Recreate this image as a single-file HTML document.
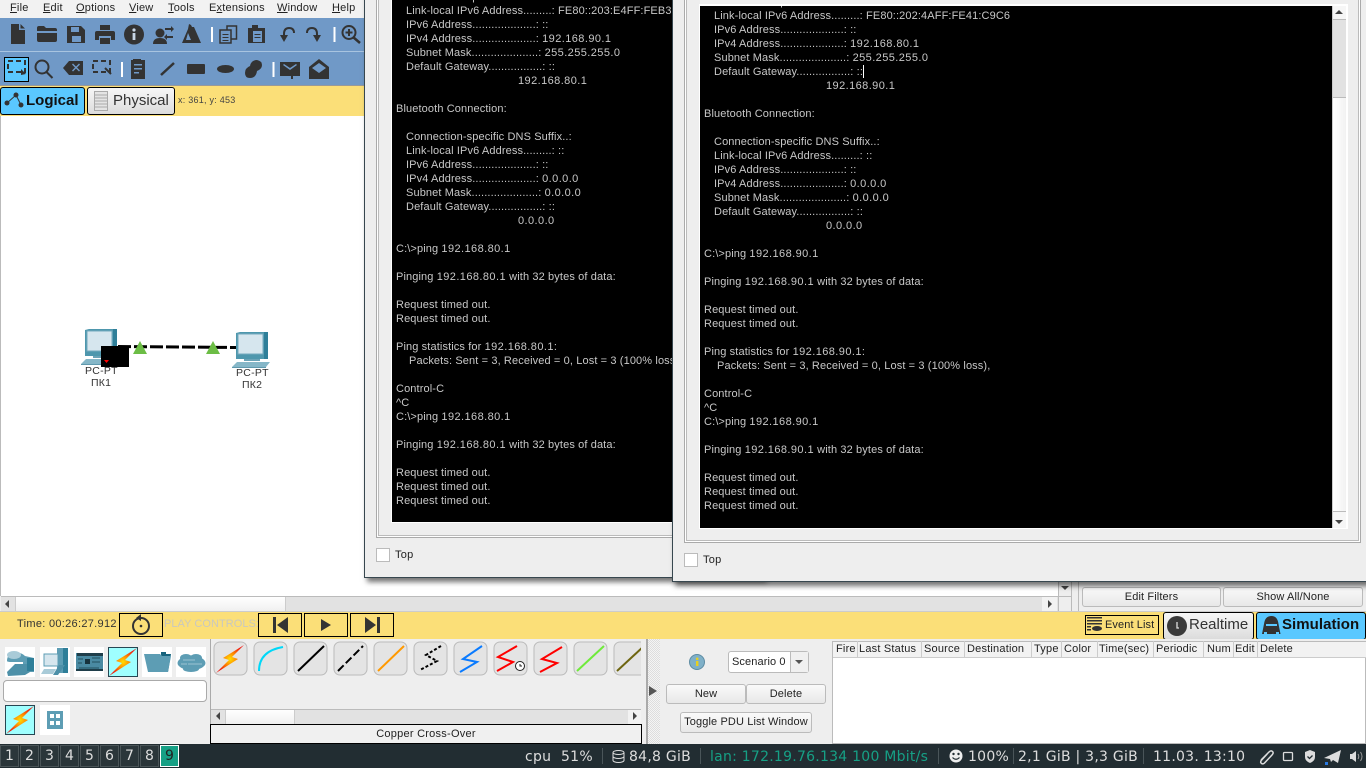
<!DOCTYPE html>
<html><head><meta charset="utf-8"><title>Packet Tracer</title>
<style>
html,body{margin:0;padding:0;width:1366px;height:768px;overflow:hidden;background:#eee;font-family:"Liberation Sans",sans-serif;color:#222}
.a,.t{position:absolute}
.t{white-space:pre;font-size:11px;line-height:14px;letter-spacing:.25px}
.btn{position:absolute;box-sizing:border-box;border:1px solid #bbb;border-radius:3px;background:linear-gradient(#fafafa,#e8e8e8);font-size:11px;text-align:center;letter-spacing:.12px;color:#222}
.yb{position:absolute;box-sizing:border-box;top:613px;height:24px;width:44px;border:1px solid #000;background:#fbdf78}
.win{position:absolute;background:#eee;border:1px solid #37474f;box-sizing:border-box;box-shadow:3px 4px 5px rgba(0,0,0,.55)}
.frame{position:absolute;border-left:1px solid #aaa;border-right:1px solid #aaa;border-bottom:1px solid #aaa;box-shadow:inset 1px 0 0 #fff,inset -1px 0 0 #fff,inset 0 -1px 0 #fff,inset 2px 0 0 #bbb,inset -2px 0 0 #bbb,inset 0 -2px 0 #bbb}
.term{position:absolute;background:#000;overflow:hidden;border:1px solid #fff;border-top-width:2px}
.term pre{position:absolute;margin:0;left:4px;font:11px/14px "Liberation Sans",sans-serif;letter-spacing:.12px;color:#c8c8c8}
.term s{text-decoration:none;display:inline-block;width:10px}
.term u{text-decoration:none;display:inline-block;width:122px}
.term em{font-style:normal;display:inline-block;width:13px}
.term i{font-style:normal;letter-spacing:.42px}
.term b{display:inline-block;width:1px;height:13px;background:#fff;vertical-align:-3px}
.chk{position:absolute;width:12px;height:12px;background:#fff;border:1px solid #bbb}
.th{position:absolute;top:641px;height:17px;line-height:17px;font-size:11px;color:#222;border-right:1px solid #ccc;box-sizing:border-box;padding-left:3px;letter-spacing:.2px;white-space:nowrap}
.ws{position:absolute;top:745px;box-sizing:border-box;width:19px;height:22px;border:1px solid #4b5558;color:#ddd;font:14px/21px "DejaVu Sans",sans-serif;text-align:center;background:#2b363a}
.st{position:absolute;top:748px;font:14px/18px "DejaVu Sans",sans-serif;color:#ddd;white-space:pre;letter-spacing:.25px}
.sep{position:absolute;top:748px;height:16px;width:1px;background:#4a5559}
.tile{position:absolute;width:30px;height:30px;background:#fff}
.m{top:1px;line-height:15px;letter-spacing:.2px}
</style></head><body>

<svg width="0" height="0" style="position:absolute"><defs>
<radialGradient id="bg"><stop offset="0" stop-color="#ffe000"/><stop offset=".45" stop-color="#ff8a00"/><stop offset="1" stop-color="#f01a10"/></radialGradient>
<symbol id="bolt" viewBox="0 0 30 30"><polygon points="29,1 8,14 14,16 1,29 23,15 17,13" fill="url(#bg)"/></symbol>
<symbol id="pc" viewBox="0 0 44 40"><polygon points="4,3 8,2 36,2 36,29 4,29" fill="#4e97ad"/><rect x="6" y="4" width="25" height="20" fill="#d6e6ee" stroke="#74a9bd"/><polygon points="32,2 36,2 36,29 32,29" fill="#2f7f99"/><rect x="12" y="29" width="16" height="2" fill="#6aa3b7"/><polygon points="5,32 38,32 34,37 0,37" fill="#86b7c8"/><polygon points="0,37 34,37 34,38 0,38" fill="#5f99ae"/></symbol>
</defs></svg>

<!-- menu -->
<div class="a" style="left:0;top:0;width:365px;height:18px;background:#f2f2f2"></div>
<div class="t m" style="left:10px"><u>F</u>ile</div>
<div class="t m" style="left:43px"><u>E</u>dit</div>
<div class="t m" style="left:76px"><u>O</u>ptions</div>
<div class="t m" style="left:129px"><u>V</u>iew</div>
<div class="t m" style="left:168px"><u>T</u>ools</div>
<div class="t m" style="left:209px">E<u>x</u>tensions</div>
<div class="t m" style="left:277px"><u>W</u>indow</div>
<div class="t m" style="left:332px"><u>H</u>elp</div>

<!-- toolbars -->
<svg class="a" style="left:0;top:18px" width="365" height="68" viewBox="0 18 365 68">
<rect x="0" y="18" width="365" height="33" fill="#7099c7"/><rect x="0" y="51" width="365" height="1" fill="#a8c4e0"/><rect x="0" y="52" width="365" height="33" fill="#7099c7"/><rect y="85" width="365" height="1" fill="#999"/>
<g fill="#333">
<path d="M11 24h8v6h6v14H11zM20.500 24l4.500 4.500h-4.500z"/>
<path d="M37 28q0-2 2-2h5l2 2h9q2 0 2 2v1H37zM37 33h20v7q0 2-2 2H39q-2 0-2-2z"/>
<path fill-rule="evenodd" d="M67 26h14l4 4v13H67zM71 27v5h8v-5zM72 36v6h9v-6z"/>
<path d="M100 25h10v5h-10zM97 31h16q2 0 2 2v7h-4v-4H99v4h-4v-7q0-2 2-2zM100 38h10v6h-10z"/>
<circle cx="134" cy="34.500" r="10"/><rect x="132.600" y="33" width="2.800" height="7" fill="#c8d6e6"/><circle cx="134" cy="30" r="1.600" fill="#c8d6e6"/>
<circle cx="160" cy="33" r="4.500"/><path d="M153 44q0-6 7-6t7 6zM165 28h6v-2l3 3-3 3v-2h-6zM173 36h-6v-2l-3 3 3 3v-2h6z"/>
<path d="M189 24l2 1 1 2 7 16h-17l6-14zM188 33l-2 7h5zM194 27l7 16h-2l-7-16z" fill-rule="evenodd"/>
<rect x="211" y="27" width="2" height="15" fill="#fff"/>
<rect x="227" y="26" width="9.500" height="13" fill="none" stroke="#333" stroke-width="1.500"/><rect x="220" y="30" width="11" height="13" fill="#7099c7" stroke="#333" stroke-width="1.500"/><path d="M222.500 34h6v1h-6zM222.500 37h6v1h-6zM222.500 40h6v1h-6z"/>
<path d="M248 28h4v-3h6v3h7v15h-17z"/><rect x="253" y="31" width="9" height="11" fill="#7099c7"/><path d="M254.500 34h6v1h-6zM254.500 37h6v1h-6z"/>
<path d="M284 36v-2q0-6 5-6t5 5" fill="none" stroke="#333" stroke-width="2"/><polygon points="280,35 288,35 284,42"/>
<path d="M317 36v-2q0-6-5-6t-5 5" fill="none" stroke="#333" stroke-width="2"/><polygon points="313,35 321,35 317,42"/>
<rect x="333.500" y="27" width="2" height="15" fill="#fff"/>
<circle cx="349" cy="32.500" r="6.500" fill="none" stroke="#333" stroke-width="2"/><path d="M353 37l7 6" stroke="#333" stroke-width="2.500"/><path d="M345.500 31.500h7v2h-7zM348 29h2v7h-2z"/>
</g>
<rect x="4.500" y="57.500" width="24" height="24" fill="#5ac8ff" stroke="#000"/>
<g fill="none" stroke="#333" stroke-width="2">
<rect x="8" y="61" width="17" height="11" stroke-dasharray="5 3"/>
<circle cx="42" cy="67" r="6.500"/><path d="M46.500 72l6 6"/>
<rect x="93" y="61" width="17" height="11" stroke-dasharray="5 3"/><path d="M105 68l6 6"/>
<path d="M161 75l13-12" stroke-width="2.500"/>
</g>
<polygon points="21,69 26,74 21,75" fill="#333"/>
<g fill="#333">
<path fill-rule="evenodd" d="M69 61h14v14H69l-6-7zM72 64.500l3 3-3 3 1 1 3-3 3 3 1-1-3-3 3-3-1-1-3 3-3-3z"/>
<rect x="121" y="62" width="2" height="15" fill="#fff"/>
<path fill-rule="evenodd" d="M131 60h2v-1h8v1h4v19h-14zM134 64v1.500h8V64zM134 68v1.500h8V68zM134 72v1.500h5V72z"/>
<rect x="187" y="64" width="18" height="10" rx="1"/>
<ellipse cx="225.500" cy="69" rx="8.500" ry="4"/>
<path d="M245 73q0-5 5-7 1-6 7-6 5 1 5 5 0 4-5 6-1 7-7 7-5 0-5-5z"/>
<rect x="272.500" y="62" width="2" height="15" fill="#fff"/>
<path fill-rule="evenodd" d="M280 62h20v14h-7v3h-2v-3h-11zM283 65l7 5 7-5-1-1-6 4-6-4z"/>
<path d="M309 67l10-8 10 8v12h-20zM312 68l7 5 7-5-7-5z" fill-rule="evenodd"/>
</g>
</svg>

<!-- yellow bar top -->
<div class="a" style="left:0;top:86px;width:365px;height:30px;background:#fbdf78"></div>
<div class="a" style="left:0;top:87px;width:85px;height:28px;box-sizing:border-box;border:1px solid #000;border-radius:3px;background:#5ac8ff"></div>
<svg class="a" style="left:3px;top:91px" width="22" height="20" viewBox="3 91 22 20"><path d="M7 103L16 95 21 105" fill="none" stroke="#333"/><circle cx="16" cy="95" r="2.500" fill="#333"/><circle cx="7" cy="103" r="2.500" fill="#333"/><circle cx="21" cy="105" r="2.500" fill="#333"/></svg>
<div class="t" style="left:26px;top:92px;font-size:15px;line-height:18px;font-weight:bold;letter-spacing:0;color:#111">Logical</div>
<div class="a" style="left:87px;top:87px;width:88px;height:28px;box-sizing:border-box;border:1px solid #000;border-radius:3px;background:linear-gradient(#f7f7f7,#dcdcdc)"></div>
<svg class="a" style="left:94px;top:91px" width="14" height="20"><rect x=".5" y=".5" width="13" height="19" fill="#e4e4e4" stroke="#aaa"/><path d="M1 4h12M1 7h12M1 10h12M1 13h12M1 16h12" stroke="#aaa"/></svg>
<div class="t" style="left:113px;top:92px;font-size:15px;line-height:18px;letter-spacing:0;color:#333">Physical</div>
<div class="t" style="left:178px;top:94px;font-size:9px;line-height:12px;letter-spacing:.25px;color:#444">x: 361, y: 453</div>

<!-- canvas -->
<div class="a" style="left:0;top:116px;width:1058px;height:480px;background:#fff;border-left:1px solid #bbb;box-sizing:border-box"></div>
<svg class="a" style="left:81px;top:327px" width="44" height="40"><use href="#pc" width="44" height="40"/></svg>
<svg class="a" style="left:232px;top:330px" width="44" height="40"><use href="#pc" width="44" height="40"/></svg>
<svg class="a" style="left:100px;top:335px" width="150" height="34" viewBox="100 335 150 34">
<path d="M118 346.500L236 347.500" stroke="#000" stroke-width="3" stroke-dasharray="13 3"/>
<rect x="101" y="346" width="28" height="21" fill="#000"/><path d="M104 360h5l-2.500 3z" fill="#f00"/>
<polygon points="140,341 147,354 133,354" fill="#6cbd45"/><polygon points="213,341 220,354 206,354" fill="#6cbd45"/>
</svg>
<div class="t" style="left:85px;top:365px;font-size:10.500px;line-height:12px;color:#333">PC-PT</div>
<div class="t" style="left:91px;top:377px;font-size:10.500px;line-height:12px;color:#333">ПК1</div>
<div class="t" style="left:236px;top:367px;font-size:10.500px;line-height:12px;color:#333">PC-PT</div>
<div class="t" style="left:242px;top:379px;font-size:10.500px;line-height:12px;color:#333">ПК2</div>

<!-- canvas h-scroll -->
<div class="a" style="left:1px;top:596px;width:1057px;height:15px;background:#e2e2e2;border-top:1px solid #bbb;box-sizing:border-box"></div>
<div class="a" style="left:15px;top:597px;width:271px;height:14px;background:linear-gradient(#fff,#f0f0f0);border-left:1px solid #ccc;border-right:1px solid #ccc;box-sizing:border-box"></div>
<div class="a" style="left:5px;top:600px;border:4px solid transparent;border-right:4px solid #444;border-left:0"></div>
<div class="a" style="left:1042px;top:597px;width:15px;height:14px;background:#f2f2f2"></div>
<div class="a" style="left:1048px;top:600px;border:4px solid transparent;border-left:4px solid #444;border-right:0"></div>
<div class="a" style="left:1058px;top:581px;width:14px;height:30px;background:#eee;border-left:1px solid #bbb;border-right:1px solid #bbb;box-sizing:border-box"></div>
<div class="a" style="left:1061px;top:586px;border:4px solid transparent;border-top:4px solid #444;border-bottom:0"></div>
<div class="a" style="left:1058px;top:596px;width:14px;height:1px;background:#bbb"></div>
<div class="a" style="left:1078px;top:581px;width:288px;height:30px;background:#eee;border-left:1px solid #bbb;box-sizing:border-box"></div>
<div class="btn" style="left:1082px;top:587px;width:139px;height:20px;line-height:18px">Edit Filters</div>
<div class="btn" style="left:1223px;top:587px;width:140px;height:20px;line-height:18px">Show All/None</div>

<!-- terminal window 1 -->
<div class="win" style="left:364px;top:-10px;width:400px;height:588px;z-index:2">
 <div class="frame" style="left:11px;top:0;width:400px;height:546px"></div>
 <div class="term" style="left:26px;top:8px;width:400px;height:523px;border-top:0">
<pre style="top:-9px">
<s></s>Connection-specific DNS Suffix..:
<s></s>Link-local IPv6 Address.........: FE80::203:E4FF:FEB3:
<s></s>IPv6 Address....................: ::
<s></s>IPv4 Address....................: <i>192.168.90.1</i>
<s></s>Subnet Mask.....................: <i>255.255.255.0</i>
<s></s>Default Gateway.................: ::
<u></u><i>192.168.80.1</i>

Bluetooth Connection:

<s></s>Connection-specific DNS Suffix..:
<s></s>Link-local IPv6 Address.........: ::
<s></s>IPv6 Address....................: ::
<s></s>IPv4 Address....................: <i>0.0.0.0</i>
<s></s>Subnet Mask.....................: <i>0.0.0.0</i>
<s></s>Default Gateway.................: ::
<u></u><i>0.0.0.0</i>

C:\&gt;ping <i>192.168.80.1</i>

Pinging <i>192.168.80.1</i> with 32 bytes of data:

Request timed out.
Request timed out.

Ping statistics for <i>192.168.80.1</i>:
<em></em>Packets: Sent = 3, Received = 0, Lost = 3 (100% loss),

Control-C
^C
C:\&gt;ping <i>192.168.80.1</i>

Pinging <i>192.168.80.1</i> with 32 bytes of data:

Request timed out.
Request timed out.
Request timed out.</pre>
 </div>
 <div class="chk" style="left:11px;top:557px"></div>
 <div class="t" style="left:30px;top:557px">Top</div>
</div>

<!-- terminal window 2 -->
<div class="win" style="left:672px;top:-10px;width:710px;height:592px;z-index:3">
 <div class="frame" style="left:11px;top:0;width:675px;height:551px"></div>
 <div class="a" style="left:658px;top:13px;width:17px;height:525px;background:#fff"></div>
 <div class="term" style="left:26px;top:13px;width:632px;height:522px">
<pre style="top:-25px">

<s></s>Connection-specific DNS Suffix..:
<s></s>Link-local IPv6 Address.........: FE80::202:4AFF:FE41:C9C6
<s></s>IPv6 Address....................: ::
<s></s>IPv4 Address....................: <i>192.168.80.1</i>
<s></s>Subnet Mask.....................: <i>255.255.255.0</i>
<s></s>Default Gateway.................: ::<b></b>
<u></u><i>192.168.90.1</i>

Bluetooth Connection:

<s></s>Connection-specific DNS Suffix..:
<s></s>Link-local IPv6 Address.........: ::
<s></s>IPv6 Address....................: ::
<s></s>IPv4 Address....................: <i>0.0.0.0</i>
<s></s>Subnet Mask.....................: <i>0.0.0.0</i>
<s></s>Default Gateway.................: ::
<u></u><i>0.0.0.0</i>

C:\&gt;ping <i>192.168.90.1</i>

Pinging <i>192.168.90.1</i> with 32 bytes of data:

Request timed out.
Request timed out.

Ping statistics for <i>192.168.90.1</i>:
<em></em>Packets: Sent = 3, Received = 0, Lost = 3 (100% loss),

Control-C
^C
C:\&gt;ping <i>192.168.90.1</i>

Pinging <i>192.168.90.1</i> with 32 bytes of data:

Request timed out.
Request timed out.
Request timed out.</pre>
 </div>
 <div class="a" style="left:659px;top:15px;width:14px;height:522px;background:#e2e2e2;border-left:1px solid #ccc;box-sizing:border-box"></div>
 <div class="a" style="left:660px;top:15px;width:13px;height:14px;background:#f6f6f6;border-bottom:1px solid #bbb;box-sizing:border-box"></div>
 <div class="a" style="left:662px;top:19px;border:4px solid transparent;border-bottom:4px solid #444;border-top:0"></div>
 <div class="a" style="left:660px;top:106px;width:13px;height:415px;background:linear-gradient(90deg,#fff,#f2f2f2);border-top:1px solid #bbb;border-bottom:1px solid #bbb;box-sizing:border-box"></div>
 <div class="a" style="left:660px;top:521px;width:13px;height:16px;background:#f6f6f6"></div>
 <div class="a" style="left:662px;top:529px;border:4px solid transparent;border-top:4px solid #444;border-bottom:0"></div>
 <div class="chk" style="left:11px;top:562px"></div>
 <div class="t" style="left:30px;top:562px">Top</div>
</div>

<!-- yellow bar bottom -->
<div class="a" style="left:0;top:611px;width:1366px;height:28px;background:#fbdf78;border-top:1px solid #ccc;box-sizing:border-box"></div>
<div class="t" style="left:17px;top:617px;letter-spacing:.3px;color:#333">Time: 00:26:27.912</div>
<div class="yb" style="left:119px"></div>
<svg class="a" style="left:130px;top:614px" width="22" height="23"><circle cx="11" cy="12" r="8" fill="none" stroke="#333" stroke-width="2"/><circle cx="11" cy="12" r="1.300" fill="#333"/><polygon points="11,0 11,7 6,4" fill="#333"/></svg>
<div class="t" style="left:164px;top:617px;letter-spacing:.05px;color:#c8c8c0">PLAY CONTROLS:</div>
<div class="yb" style="left:258px"></div><div class="yb" style="left:304px"></div><div class="yb" style="left:350px"></div>
<svg class="a" style="left:258px;top:613px" width="136" height="24" fill="#333"><path d="M15 4h3v16h-3zM30 4v16l-11-8z"/><path d="M63 6v12l10-6z"/><path d="M107 4v16l11-8zM119 4h3v16h-3z"/></svg>

<div class="a" style="left:1085px;top:615px;width:74px;height:20px;border:1px solid #000;box-sizing:border-box"></div>
<svg class="a" style="left:1087px;top:617px" width="18" height="17" fill="#333"><path d="M0 0h15v1.500H0zM0 3h15v1.500H0zM0 6h15v1.500H0zM0 9h4v1.500H0zM0 12h4v1.500H0z"/><ellipse cx="10" cy="11.500" rx="5" ry="2.500"/></svg>
<div class="t" style="left:1105px;top:618px;letter-spacing:.1px">Event List</div>
<div class="a" style="left:1163px;top:612px;width:91px;height:28px;box-sizing:border-box;border:1px solid #000;border-radius:3px;background:linear-gradient(#f7f7f7,#dcdcdc)"></div>
<svg class="a" style="left:1167px;top:616px" width="20" height="20"><circle cx="10" cy="10" r="10" fill="#3a3a3a"/><path d="M10 6v6h2" stroke="#ddd" fill="none" stroke-width="1.300"/></svg>
<div class="t" style="left:1189px;top:616px;font-size:15px;line-height:18px;letter-spacing:0;color:#333">Realtime</div>
<div class="a" style="left:1256px;top:612px;width:110px;height:28px;box-sizing:border-box;border:1px solid #000;border-radius:3px;background:#5ac8ff"></div>
<svg class="a" style="left:1262px;top:615px" width="19" height="21" fill="#333"><path d="M9.500 1q6 0 7 8l2 10H0L2 9q1-8 7.500-8z"/><rect x="4" y="9" width="11" height="2" fill="#5ac8ff"/><rect x="2" y="17" width="3" height="3" fill="#5ac8ff"/><rect x="14" y="17" width="3" height="3" fill="#5ac8ff"/></svg>
<div class="t" style="left:1282px;top:616px;font-size:15px;line-height:18px;font-weight:bold;letter-spacing:.05px;color:#111">Simulation</div>

<!-- bottom panel -->
<div class="a" style="left:0;top:639px;width:1366px;height:105px;background:#eee"></div>
<div class="tile" style="left:5px;top:647px"></div><div class="tile" style="left:40px;top:647px"></div><div class="tile" style="left:74px;top:647px"></div><div class="tile" style="left:142px;top:647px"></div><div class="tile" style="left:176px;top:647px"></div><div class="tile" style="left:40px;top:705px"></div>
<div class="tile" style="left:108px;top:647px;background:#9fffff;box-sizing:border-box;border:1px solid #264653"></div>
<div class="tile" style="left:5px;top:705px;background:#9fffff;box-sizing:border-box;border:1px solid #264653"></div>
<svg class="a" style="left:0;top:640px" width="210" height="100" viewBox="0 640 210 100">
<use href="#bolt" x="108" y="647" width="30" height="30"/><use href="#bolt" x="5" y="705" width="30" height="30"/>
<path d="M7 661q0-7 7-8 7-1 11 3l9 2v14H23v-10H12q-5 0-5-1z" fill="#5d9db4"/><ellipse cx="14" cy="655" rx="7" ry="4" fill="#a9cbd8"/><polygon points="7,672 15,664 28,664 30,672 25,675 8,676" fill="#4d90a8"/><rect x="27" y="658" width="7" height="13" fill="#2f7f99"/>
<rect x="57" y="648" width="11" height="25" fill="#5d9db4"/><rect x="63" y="648" width="5" height="25" fill="#2f7f99"/><rect x="44" y="654" width="14" height="12" fill="#d6e6ee" stroke="#5d9db4"/><polygon points="44,669 56,669 53,674 41,674" fill="#a9cbd8"/><polygon points="59,665 65,665 58,675 53,675" fill="#4d90a8"/>
<rect x="76" y="653" width="27" height="18" fill="#4a8aa2"/><rect x="77" y="653" width="26" height="3" fill="#1f3e4a"/><rect x="85" y="659" width="5" height="5" fill="#17323c"/><path d="M78 659h5M78 663h4M92 658h8M92 662h8M79 668h20" stroke="#22505f"/><rect x="76" y="669" width="27" height="2" fill="#1f3e4a"/>
<path d="M161 654v-2h5v2h5l-3 18h-6z" fill="#17637d"/><polygon points="144,654 160,654 162,656 171,656 168,672 148,672" fill="#5d9db4"/>
<ellipse cx="191.500" cy="663" rx="14" ry="7" fill="#5d9db4"/><ellipse cx="186" cy="658" rx="6" ry="4" fill="#5d9db4"/><ellipse cx="196" cy="658" rx="6" ry="4" fill="#5d9db4"/><ellipse cx="191" cy="669" rx="8" ry="3" fill="#5d9db4"/><path d="M183 660h12M188 664h14M181 664h6" stroke="#9cc4d2"/>
<rect x="47" y="711" width="16" height="18" fill="#5d9db4"/><rect x="50" y="714" width="4" height="4" fill="#fff"/><rect x="56" y="714" width="4" height="4" fill="#fff"/><rect x="50" y="721" width="4" height="4" fill="#fff"/><rect x="56" y="721" width="4" height="4" fill="#fff"/>
</svg>
<div class="a" style="left:3px;top:680px;width:204px;height:22px;box-sizing:border-box;background:#fff;border:1px solid #aaa;border-radius:4px"></div>
<div class="a" style="left:210px;top:639px;width:1px;height:105px;background:#aaa"></div>

<!-- cable icons -->
<div class="a" style="left:211px;top:639px;width:430px;height:70px;overflow:hidden">
<svg class="a" style="left:0;top:0" width="430" height="42" viewBox="211 639 430 42">
<g fill="#e4e4e4" stroke="#bbb"><rect x="214" y="642" width="33" height="33" rx="6"/><rect x="254" y="642" width="33" height="33" rx="6"/><rect x="294" y="642" width="33" height="33" rx="6"/><rect x="334" y="642" width="33" height="33" rx="6"/><rect x="374" y="642" width="33" height="33" rx="6"/><rect x="414" y="642" width="33" height="33" rx="6"/><rect x="454" y="642" width="33" height="33" rx="6"/><rect x="494" y="642" width="33" height="33" rx="6"/><rect x="534" y="642" width="33" height="33" rx="6"/><rect x="574" y="642" width="33" height="33" rx="6"/><rect x="614" y="642" width="33" height="33" rx="6"/></g>
<use href="#bolt" x="215" y="644" width="30" height="30"/>
<path d="M259 671q0-20 24-24" fill="none" stroke="#00d8f8" stroke-width="2"/>
<path d="M298 671l26-25" stroke="#000" stroke-width="2"/>
<path d="M338 671l25-25" stroke="#000" stroke-width="2" stroke-dasharray="8 3"/>
<path d="M378 671l26-25" stroke="#f90" stroke-width="2"/>
<path d="M441 646l-15 9 11 6-17 9" fill="none" stroke="#000" stroke-width="2" stroke-dasharray="3 2"/>
<path d="M482 646l-19 13 14 3-17 10" fill="none" stroke="#0a7bff" stroke-width="2"/>
<path d="M517 646l-19 11 15 5-16 9" fill="none" stroke="#f00" stroke-width="2"/><circle cx="520" cy="666" r="4.500" fill="#fff" stroke="#222"/><path d="M520 664v2h2" stroke="#222" fill="none"/>
<path d="M562 647l-20 12 15 4-17 9" fill="none" stroke="#f00" stroke-width="2"/>
<path d="M577 671l27-25" stroke="#6fea3a" stroke-width="2"/>
<path d="M617 671l27-25" stroke="#6e6510" stroke-width="2"/>
</svg>
</div>
<div class="a" style="left:211px;top:709px;width:430px;height:15px;background:#e2e2e2;border-top:1px solid #bbb;box-sizing:border-box"></div>
<div class="a" style="left:225px;top:710px;width:70px;height:14px;background:linear-gradient(#fff,#f0f0f0);border-left:1px solid #ccc;border-right:1px solid #ccc;box-sizing:border-box"></div>
<div class="a" style="left:216px;top:712px;border:4px solid transparent;border-right:4px solid #444;border-left:0"></div>
<div class="a" style="left:628px;top:710px;width:13px;height:14px;background:#f2f2f2"></div>
<div class="a" style="left:633px;top:712px;border:4px solid transparent;border-left:4px solid #444;border-right:0"></div>
<div class="a" style="left:210px;top:724px;width:432px;height:20px;box-sizing:border-box;border:1px solid #000;background:#f0f0f0;font-size:11px;line-height:18px;text-align:center;letter-spacing:.25px">Copper Cross-Over</div>

<!-- splitter -->
<div class="a" style="left:646px;top:639px;width:14px;height:105px;box-sizing:border-box;border-left:2px solid #aaa;background:repeating-conic-gradient(#ddd 0 25%,#f4f4f4 0 50%) 0 0/2px 2px"></div>
<div class="a" style="left:649px;top:686px;border:5px solid transparent;border-left:8px solid #555;border-right:0"></div>

<!-- scenario -->
<svg class="a" style="left:689px;top:654px" width="16" height="16"><circle cx="8" cy="8" r="7.500" fill="#7fb0c8" stroke="#5d8ca3"/><rect x="7" y="7" width="2.400" height="5" fill="#e8d020"/><circle cx="8.200" cy="4.800" r="1.300" fill="#e8d020"/></svg>
<div class="a" style="left:728px;top:651px;width:81px;height:22px;box-sizing:border-box;border:1px solid #bbb;border-radius:3px;background:#fff"></div>
<div class="a" style="left:790px;top:652px;width:18px;height:20px;background:#f0f0f0;border-left:1px solid #bbb;box-sizing:border-box"></div>
<div class="t" style="left:732px;top:655px;letter-spacing:.1px">Scenario 0</div>
<div class="a" style="left:795px;top:660px;border:4px solid transparent;border-top:4px solid #555;border-bottom:0"></div>
<div class="btn" style="left:666px;top:684px;width:80px;height:20px;line-height:18px">New</div>
<div class="btn" style="left:746px;top:684px;width:80px;height:20px;line-height:18px">Delete</div>
<div class="btn" style="left:680px;top:712px;width:132px;height:21px;line-height:19px">Toggle PDU List Window</div>

<!-- PDU table -->
<div class="a" style="left:832px;top:641px;width:534px;height:103px;background:#fff;border:1px solid #bbb;box-sizing:border-box"></div>
<div class="a" style="left:833px;top:642px;width:533px;height:16px;background:#f2f2f2;border-bottom:1px solid #ccc;box-sizing:border-box"></div>
<div class="th" style="left:833px;width:25px">Fire</div><div class="th" style="left:856px;width:66px">Last Status</div><div class="th" style="left:921px;width:44px">Source</div><div class="th" style="left:964px;width:68px">Destination</div><div class="th" style="left:1031px;width:31px">Type</div><div class="th" style="left:1061px;width:37px">Color</div><div class="th" style="left:1096px;width:58px">Time(sec)</div><div class="th" style="left:1153px;width:51px">Periodic</div><div class="th" style="left:1204px;width:30px">Num</div><div class="th" style="left:1232px;width:26px">Edit</div><div class="th" style="left:1257px;width:109px;border-right:0">Delete</div>

<!-- taskbar -->
<div class="a" style="left:0;top:744px;width:1366px;height:24px;background:#222d32"></div>
<div class="ws" style="left:0">1</div><div class="ws" style="left:20px">2</div><div class="ws" style="left:40px">3</div><div class="ws" style="left:60px">4</div><div class="ws" style="left:80px">5</div><div class="ws" style="left:100px">6</div><div class="ws" style="left:120px">7</div><div class="ws" style="left:140px">8</div>
<div class="ws" style="left:160px;background:#16a085;border-color:#fff;color:#222">9</div>
<div class="st" style="left:525px">cpu</div><div class="st" style="left:561px">51%</div>
<div class="sep" style="left:602px"></div>
<svg class="a" style="left:612px;top:750px" width="13" height="13" fill="none" stroke="#ddd"><ellipse cx="6.500" cy="2.500" rx="5.500" ry="2"/><path d="M1 2.500v8c0 1 2.500 2 5.500 2s5.500-1 5.500-2v-8M1 6.500c0 1 2.500 2 5.500 2s5.500-1 5.500-2"/></svg>
<div class="st" style="left:629px">84,8 GiB</div>
<div class="sep" style="left:700px"></div>
<div class="st" style="left:710px;color:#16a085">lan: 172.19.76.134 100 Mbit/s</div>
<div class="sep" style="left:938px"></div>
<svg class="a" style="left:949px;top:749px" width="14" height="14"><circle cx="7" cy="7" r="6.500" fill="#eee"/><circle cx="4.500" cy="5" r="1.200" fill="#222d32"/><circle cx="9.500" cy="5" r="1.200" fill="#222d32"/><path d="M3.500 8.500q3.500 3.500 7 0" fill="none" stroke="#222d32" stroke-width="1.200"/></svg>
<div class="st" style="left:968px">100%</div>
<div class="sep" style="left:1013px"></div>
<div class="st" style="left:1018px">2,1 GiB | 3,3 GiB</div>
<div class="sep" style="left:1143px"></div>
<div class="st" style="left:1153px">11.03. 13:10</div>
<svg class="a" style="left:1258px;top:748px" width="108" height="18" viewBox="1258 748 108 18">
<path d="M1261 760l8-8q2-2 3.500-.5t-.5 3.500l-7.500 8q-1.500 1.500-3 .5t-.3-3l6-6.500" fill="none" stroke="#ddd" stroke-width="1.500"/>
<rect x="1283.500" y="752.500" width="9" height="8" rx="1" fill="none" stroke="#ddd" stroke-width="1.300"/>
<path d="M1305 752l5-2 5 2v5q0 4-5 6-5-2-5-6z" fill="#ddd"/><path d="M1307.500 756.500l2 2 3-3" fill="none" stroke="#222d32" stroke-width="1.300"/>
<path d="M1324 758l17-8-3 13-5-3-2 2-1-3z" fill="#ddd"/><rect x="1325" y="762" width="3" height="3" fill="#2a7ae2"/>
<path d="M1350 754h2l4-3v11l-4-3h-2z" fill="#ddd"/><path d="M1358 754q1.500 2.500 0 5M1360.500 752q3 4.500 0 9" fill="none" stroke="#999"/>
</svg>
</body></html>
